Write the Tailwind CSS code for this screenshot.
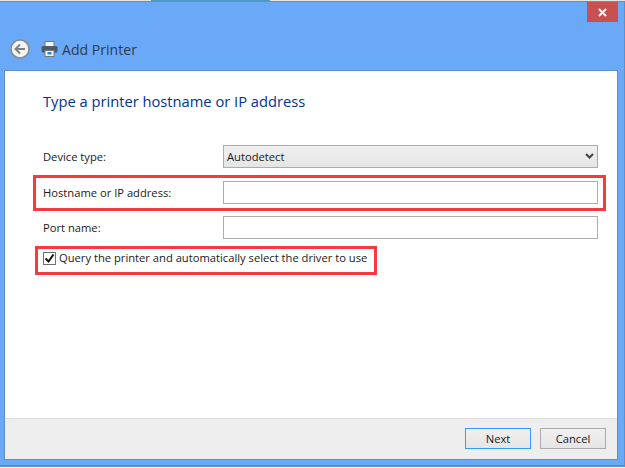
<!DOCTYPE html>
<html lang="en">

<head>
  <meta charset="UTF-8" />
  <meta name="viewport" content="width=device-width, initial-scale=1.0" />
  <script src="https://cdn.jsdelivr.net/npm/@tailwindcss/browser@4"></script>
  <title>Add Printer</title>
</head>

<body class="w-[625px] h-[468px] overflow-hidden bg-white font-['Open_Sans',sans-serif] text-[11.2px] text-[#1a1a1a]">
  <!-- Strip of the window behind -->
  <div class="h-[1px] flex bg-[#e4e4e4]">
    <div class="ml-[151px] w-[119px] bg-[#4a9ac4]"></div>
  </div>

  <div class="h-[466px] flex flex-col border-t border-b-2 border-r border-[#5b8fd0] bg-[#69a9f7]">
    <!-- Title bar -->
    <div class="h-[68px] flex flex-col shrink-0">
      <div class="h-[20px] flex justify-end pr-[6px]">
        <div class="w-[31px] h-[20px] bg-[#c75050] flex items-center justify-center">
          <svg width="9" height="9" viewBox="0 0 9 9" stroke="white" stroke-width="2" fill="none">
            <path d="M1 1l7 7M8 1l-7 7" />
          </svg>
        </div>
      </div>
      <div class="flex items-center h-[24px] mt-[15px] pl-[10px]">
        <svg width="20" height="20" viewBox="0 0 20 20">
          <circle cx="10" cy="10" r="9" fill="#f4f4f4" stroke="#8a8a8a" stroke-width="1.5" />
          <path d="M15 10H6M10 5.500L5.500 10l4.500 4.500" fill="none" stroke="#808080" stroke-width="2" />
        </svg>
        <svg class="ml-[11px]" width="17" height="16" viewBox="0 0 17 16">
          <rect x="4" y="0.500" width="9" height="5" fill="#f4f4f4" stroke="#777" />
          <rect x="0.500" y="5" width="16" height="6.500" rx="1.500" fill="#4c5a68" />
          <rect x="4" y="9.500" width="9" height="6" fill="#f4f4f4" stroke="#777" />
          <rect x="6.500" y="11" width="4" height="2.500" fill="#2f86c9" />
        </svg>
        <span class="ml-[4px] pt-[2px] text-[14.1px] text-[#2d3d52]">Add Printer</span>
      </div>
    </div>

    <!-- Content -->
    <div class="flex-1 flex flex-col ml-[4px] mr-[6px] mb-[5px] bg-white border border-[#5b8fd0]">
      <div class="flex-1 pl-[38px] pr-[19px]">
        <h1 class="mt-[20px] text-[14.7px] leading-[20px] text-[#003399]">Type a printer hostname or IP address</h1>

        <div class="mt-[34px] flex items-center h-[23px]">
          <label class="w-[180px] shrink-0 pt-[2px]">Device type:</label>
          <div class="flex-1 h-[23px] flex items-center justify-between pl-[3px] pr-[3px] border border-[#acacac] bg-gradient-to-b from-[#f0f0f0] to-[#e5e5e5]">
            <span class="pt-[2px]">Autodetect</span>
            <svg width="9" height="7" viewBox="0 0 9 7" fill="none" stroke="#444" stroke-width="2">
              <path d="M1 1l3.500 3.500L8 1" />
            </svg>
          </div>
        </div>

        <div class="relative mt-[13px] flex items-center h-[23px]">
          <label class="w-[180px] shrink-0 pt-[2px]">Hostname or IP address:</label>
          <div class="flex-1 h-[23px] border border-[#acacac] bg-white"></div>
          <div class="absolute left-[-10px] right-[-8px] top-[-6px] bottom-[-7px] border-[3px] border-[#f63a3d]"></div>
        </div>

        <div class="mt-[12px] flex items-center h-[23px]">
          <label class="w-[180px] shrink-0 pt-[2px]">Port name:</label>
          <div class="flex-1 h-[23px] border border-[#acacac] bg-white"></div>
        </div>

        <div class="mt-[7px] w-[342px] h-[29px] -ml-[8px] pl-[8px] pb-[4px] flex items-center border-[3px] border-[#f63a3d]">
          <div class="w-[13px] h-[13px] -ml-[3px] border border-[#707070] bg-white flex items-center justify-center shrink-0">
            <svg width="11" height="11" viewBox="0 0 11 11" fill="none" stroke="#111" stroke-width="2">
              <path d="M1.500 5.500l3 3 5-7" />
            </svg>
          </div>
          <span class="ml-[3px] whitespace-nowrap">Query the printer and automatically select the driver to use</span>
        </div>
      </div>

      <!-- Footer -->
      <div class="h-[41px] shrink-0 flex items-start justify-end gap-[9px] pt-[9px] pr-[11px] bg-[#eeeeee] border-t border-[#dfdfdf]">
        <button class="w-[66px] h-[21px] pt-[1px] border border-[#3399ff] bg-gradient-to-b from-[#f0f0f0] to-[#e5e5e5]">Next</button>
        <button class="w-[66px] h-[21px] pt-[1px] border border-[#acacac] bg-gradient-to-b from-[#f0f0f0] to-[#e5e5e5]">Cancel</button>
      </div>
    </div>
  </div>
</body>

</html>
